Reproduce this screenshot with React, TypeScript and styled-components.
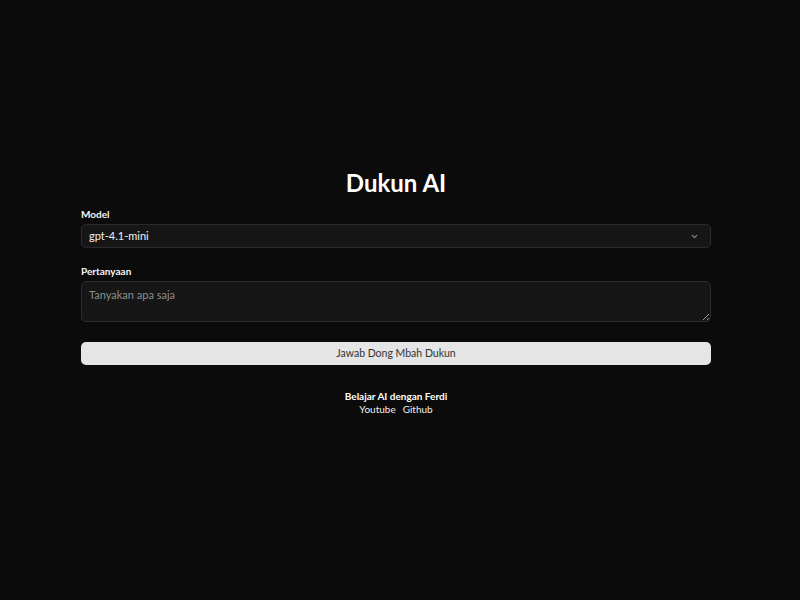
import styled, { createGlobalStyle } from "styled-components";

const GlobalStyle = createGlobalStyle`
  html, body {
    margin: 0;
    padding: 0;
    background-color: #0b0b0b;
    color: #fafafa;
    font-family: Lato, "Noto Sans", sans-serif;
  }
  * {
    box-sizing: border-box;
  }
`;

const Page = styled.main`
  min-height: 100vh;
  display: flex;
  flex-direction: column;
  align-items: center;
  justify-content: center;
  padding: 0 8px 17px 0;
`;

const Card = styled.div`
  width: 630px;
  display: flex;
  flex-direction: column;
`;

const Title = styled.h1`
  margin: 0 0 10px;
  text-align: center;
  font-size: 24px;
  font-weight: 700;
  line-height: 30px;
  color: #ffffff;
`;

const Field = styled.div`
  display: flex;
  flex-direction: column;
  gap: 3px;
  margin-bottom: 17px;
`;

const Label = styled.label`
  font-size: 10px;
  font-weight: 700;
  line-height: 13px;
  color: #f5f5f5;
`;

const SelectWrap = styled.div`
  position: relative;
`;

const Select = styled.select`
  appearance: none;
  width: 100%;
  height: 24px;
  padding: 0 28px 0 7px;
  background-color: #161616;
  border: 1px solid #2b2b2b;
  border-radius: 5px;
  color: #f2f2f2;
  font-family: inherit;
  font-size: 11px;
  outline: none;
`;

const Chevron = styled.svg`
  position: absolute;
  right: 12px;
  top: 8px;
  width: 9px;
  height: 9px;
  pointer-events: none;
`;

const TextArea = styled.textarea`
  width: 100%;
  height: 41px;
  padding: 6px 7px;
  background-color: #161616;
  border: 1px solid #2b2b2b;
  border-radius: 5px;
  color: #f2f2f2;
  font-family: inherit;
  font-size: 11px;
  resize: vertical;
  outline: none;

  &::placeholder {
    color: #8e8e8e;
  }
`;

const Button = styled.button`
  width: 100%;
  height: 23px;
  margin-top: 3px;
  border: none;
  border-radius: 5px;
  background-color: #e5e5e5;
  color: #333333;
  font-family: inherit;
  font-size: 10.5px;
  cursor: pointer;
`;

const Footer = styled.footer`
  margin-top: 25px;
  display: flex;
  flex-direction: column;
  align-items: center;
  font-size: 10px;
  line-height: 13px;
`;

const FooterTitle = styled.p`
  margin: 0;
  font-weight: 700;
  color: #ffffff;
`;

const Links = styled.div`
  display: flex;
  gap: 7px;
`;

const Link = styled.a`
  color: #f0f0f0;
  text-decoration: none;
`;

export default function App() {
  return (
    <Page>
      <GlobalStyle />
      <Card>
        <Title>Dukun AI</Title>
        <Field>
          <Label>Model</Label>
          <SelectWrap>
            <Select defaultValue="gpt-4.1-mini">
              <option value="gpt-4.1-mini">gpt-4.1-mini</option>
              <option value="gpt-4.1">gpt-4.1</option>
            </Select>
            <Chevron viewBox="0 0 24 24" fill="none" stroke="#8a8a8a" strokeWidth="3" strokeLinecap="round" strokeLinejoin="round">
              <path d="m6 9 6 6 6-6" />
            </Chevron>
          </SelectWrap>
        </Field>
        <Field>
          <Label>Pertanyaan</Label>
          <TextArea placeholder="Tanyakan apa saja" />
        </Field>
        <Button>Jawab Dong Mbah Dukun</Button>
        <Footer>
          <FooterTitle>Belajar AI dengan Ferdi</FooterTitle>
          <Links>
            <Link href="#">Youtube</Link>
            <Link href="#">Github</Link>
          </Links>
        </Footer>
      </Card>
    </Page>
  );
}
